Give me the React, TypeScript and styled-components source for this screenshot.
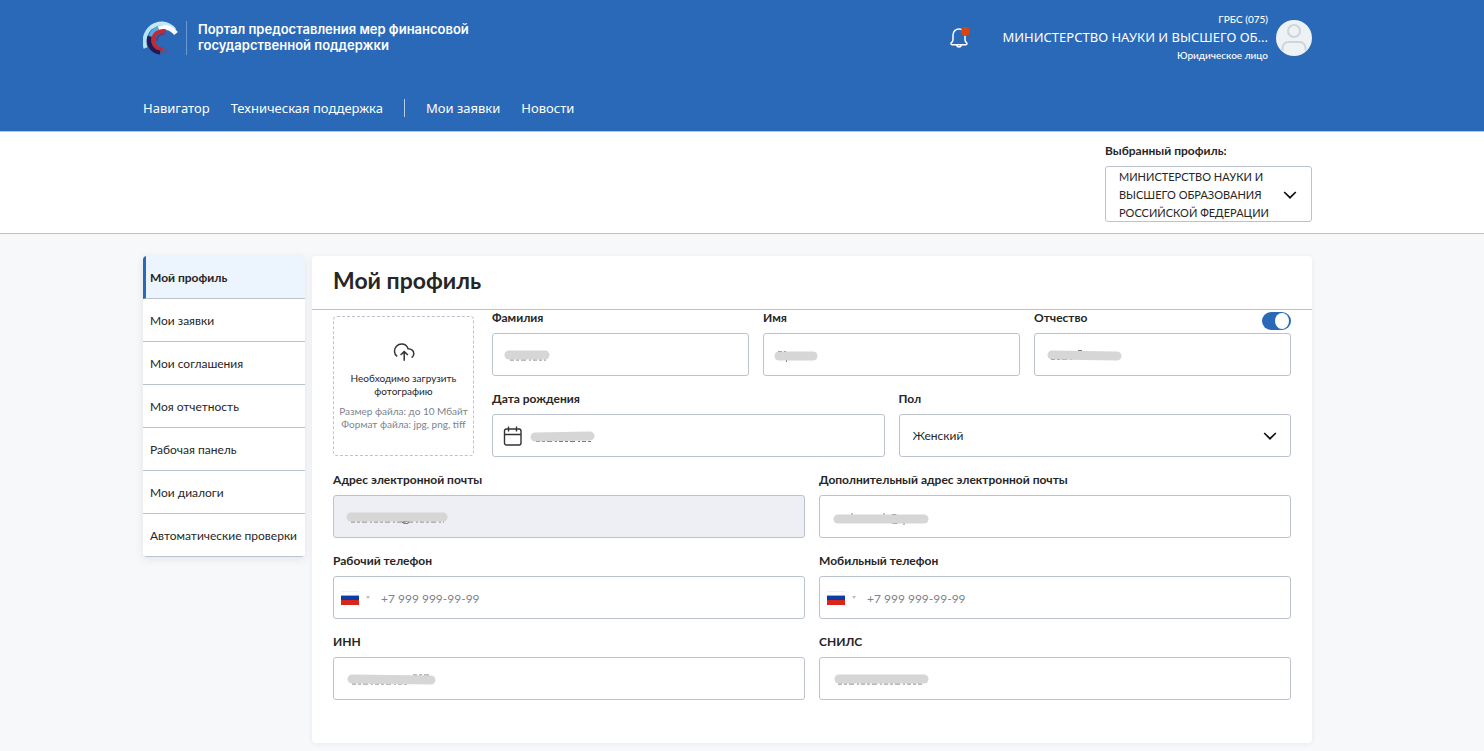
import React, { useId } from 'react';
import styled, { createGlobalStyle, css } from 'styled-components';

const color = {
  blue: '#2a69b8',
  line: '#bcc3ce',
  text: '#262626',
  muted: '#7d838d',
  page: '#f7f8fa',
};

const GlobalStyle = createGlobalStyle`
  *, *::before, *::after { box-sizing: border-box; }
  body {
    margin: 0;
    background: ${color.page};
    color: ${color.text};
    font-family: Lato, "Noto Sans", sans-serif;
    font-size: 12px;
    line-height: 16px;
  }
  button, input, select { font: inherit; color: inherit; }
`;

const gutters = css`
  padding-left: 143px;
  padding-right: 172px;
`;

/* ---------- header ---------- */

const Header = styled.header`
  ${gutters}
  background: ${color.blue};
  border-bottom: 1px solid ${color.line};
  color: #fff;
`;

const HeaderTop = styled.div`
  display: flex;
  justify-content: space-between;
  height: 76px;
`;

const Brand = styled.a`
  display: flex;
  align-items: center;
  gap: 7px;
  color: inherit;
  text-decoration: none;
`;

const BrandName = styled.span`
  padding: 0 0 2px 11px;
  border-left: 1px solid #6d98cf;
  font: 600 13px/16px Inter, sans-serif;
`;

const Account = styled.div`
  display: flex;
  align-items: center;
`;

const BellButton = styled.button`
  display: block;
  margin-right: 27px;
  padding: 0;
  border: 0;
  background: none;
  line-height: 0;
  cursor: pointer;
`;

const AccountInfo = styled.div`
  width: 270px;
  margin-right: 8px;
  padding-bottom: 2px;
  text-align: right;
`;

const AccountMeta = styled.div`
  font-size: 10px;
  font-weight: 500;
  line-height: 16px;
`;

const AccountName = styled.div`
  white-space: nowrap;
  font-family: "Noto Sans", sans-serif;
  font-size: 13px;
  line-height: 20px;
`;

const Nav = styled.nav`
  display: flex;
  align-items: center;
  gap: 21px;
  height: 55px;
  padding-top: 8px;
`;

const NavLink = styled.a`
  color: inherit;
  font-family: "Noto Sans", sans-serif;
  font-size: 13px;
  line-height: 18px;
  text-decoration: none;
`;

const NavDivider = styled.span`
  width: 1px;
  height: 18px;
  background: #b5cbe7;
`;

/* ---------- profile switch ---------- */

const ProfileBar = styled.section`
  ${gutters}
  display: flex;
  justify-content: flex-end;
  padding-top: 11px;
  padding-bottom: 11px;
  background: #fff;
  border-bottom: 1px solid ${color.line};
`;

const ProfilePicker = styled.div`
  width: 207px;
`;

const ProfileLabel = styled.label`
  display: block;
  margin-bottom: 7px;
  font-weight: 700;
`;

const PickerBox = styled.div`
  position: relative;
  display: flex;
  align-items: center;
  justify-content: space-between;
  height: 56px;
  padding: 1px 14px 0 13px;
  border: 1px solid ${color.line};
  border-radius: 3px;
  font-size: 11px;
  line-height: 18px;
`;

const OverlaySelect = styled.select`
  position: absolute;
  inset: 0;
  width: 100%;
  opacity: 0;
  cursor: pointer;
`;

/* ---------- page body ---------- */

const Main = styled.main`
  ${gutters}
  display: flex;
  align-items: flex-start;
  gap: 7px;
  padding-top: 22px;
  padding-bottom: 8px;
`;

const SideMenu = styled.nav`
  flex: 0 0 162px;
  overflow: hidden;
  background: #fff;
  border-radius: 4px;
  box-shadow: 0 2px 8px rgba(60, 80, 110, 0.12);
`;

const SideLink = styled.a<{ $active?: boolean }>`
  display: flex;
  align-items: center;
  height: 43px;
  padding-top: 2px;
  padding-left: 7px;
  border-bottom: 1px solid ${color.line};
  color: inherit;
  text-decoration: none;
  ${({ $active }) =>
    $active &&
    css`
      padding-left: 4px;
      border-left: 3px solid ${color.blue};
      background: #ecf4fe;
      font-weight: 700;
    `}
`;

const Card = styled.section`
  flex: 1;
  min-width: 0;
  background: #fff;
  border-radius: 4px;
  box-shadow: 0 1px 5px rgba(60, 80, 110, 0.08);
`;

const CardTitle = styled.h1`
  margin: 0;
  padding: 9px 21px 14px;
  border-bottom: 1px solid ${color.line};
  font-size: 23px;
  font-weight: 700;
  line-height: 30px;
`;

const Form = styled.form`
  display: grid;
  gap: 15px;
  padding: 0 21px 43px;
`;

const Intro = styled.div`
  display: flex;
  gap: 18px;
`;

const IntroFields = styled.div`
  display: grid;
  flex: 1;
  gap: 15px;
`;

const FieldRow = styled.div<{ $columns: number }>`
  display: grid;
  grid-template-columns: repeat(${({ $columns }) => $columns}, minmax(0, 1fr));
  gap: 14px;
`;

const UploadBox = styled.label`
  position: relative;
  display: flex;
  flex: 0 0 141px;
  flex-direction: column;
  align-items: center;
  height: 140px;
  margin-top: 6px;
  padding-top: 25px;
  border: 1px dashed ${color.line};
  border-radius: 4px;
  font-size: 10px;
  line-height: 13px;
  text-align: center;
  cursor: pointer;
`;

const UploadInput = styled.input`
  position: absolute;
  inset: 0;
  width: 100%;
  opacity: 0;
`;

const UploadText = styled.span`
  margin-top: 10px;
`;

const UploadHint = styled.span`
  margin-top: 7px;
  color: ${color.muted};
`;

const FieldHead = styled.div`
  display: flex;
  align-items: flex-start;
  justify-content: space-between;
  height: 23px;
`;

const FieldLabel = styled.label`
  font-weight: 700;
`;

const Control = styled.div<{ $disabled?: boolean }>`
  position: relative;
  display: flex;
  align-items: center;
  height: 43px;
  border: 1px solid ${color.line};
  border-radius: 3px;
  background: ${({ $disabled }) => ($disabled ? '#eeeff4' : '#fff')};
`;

const ControlInput = styled.input`
  flex: 1;
  min-width: 0;
  height: 100%;
  padding: 1px 11px 0;
  border: 0;
  outline: 0;
  background: none;
  &::placeholder { color: ${color.muted}; opacity: 1; }
`;

const ControlSelect = styled.select`
  flex: 1;
  height: 100%;
  padding: 1px 13px 0;
  border: 0;
  outline: 0;
  background: none;
  appearance: none;
`;

const SelectArrow = styled.span`
  position: absolute;
  right: 13px;
  display: flex;
  pointer-events: none;
`;

const LeadingIcon = styled.span`
  display: flex;
  padding-left: 10px;
`;

const CountryButton = styled.button`
  display: flex;
  align-items: center;
  gap: 7px;
  padding: 0 0 0 7px;
  border: 0;
  background: none;
`;

const Redaction = styled.svg<{ $left: number }>`
  position: absolute;
  left: ${({ $left }) => $left}px;
  top: 10px;
  overflow: visible;
  pointer-events: none;
`;

const Switch = styled.input`
  appearance: none;
  width: 29px;
  height: 18px;
  margin: 2px 0 0;
  border-radius: 9px;
  background: ${color.blue};
  cursor: pointer;
  &::before {
    content: '';
    display: block;
    width: 14px;
    height: 16px;
    margin: 1px 2px 1px 13px;
    border-radius: 50%;
    background: #fff;
  }
`;

/* ---------- drawings ---------- */

const Logo = () => (
  <svg width="36" height="36" viewBox="0 0 36 36" fill="none" aria-hidden="true">
    <path d="M2.600 28C-.5 19 3.500 8 12.500 4.800" stroke="#b5e2f5" strokeWidth="4" />
    <path d="M8 7.500C15 1.500 25 2 31.500 10" stroke="#c3e8f8" strokeWidth="4" />
    <path d="M13 10C20 5.500 28 7 33 13.500" stroke="#fff" strokeWidth="4.600" />
    <path d="M7.500 16A14 14 0 0 1 15.500 8" stroke="#5aa9dc" strokeWidth="4" />
    <path d="M6.500 16.500C4.500 24 9 32 17.500 32.600" stroke="#231a55" strokeWidth="4.400" />
    <path d="M17 32.700C20.500 33 23.500 32 26 30" stroke="#4a5a96" strokeWidth="3" />
    <path d="M22.800 11C14.500 9.500 9.800 15 10.300 20.500C10.700 25.500 14.300 29.300 20 29" stroke="#c5282f" strokeWidth="3.600" />
    <path d="M22 13.800C17 13.500 13.500 17 13.800 21" stroke="#7d2b55" strokeWidth="1.200" />
  </svg>
);

const BellIcon = () => (
  <svg width="22" height="22" viewBox="0 0 22 22" fill="none" aria-hidden="true">
    <path
      d="M4 10V8.300C4 4.300 6.800 1.900 10 1.900s6 2.400 6 6.400v4.200c0 1.700.5 2.500 1.500 3.200.7.500.6 2-.6 2H3c-1.200 0-1.300-1.500-.6-2 1-.7 1.600-1.500 1.600-3.200z"
      stroke="#fff"
      strokeWidth="1.500"
      strokeLinejoin="round"
    />
    <path d="M7.500 18c.5 1.500 1.300 2 2.500 2s2-.5 2.500-2" stroke="#fff" strokeWidth="1.500" />
    <circle cx="16.500" cy="4.500" r="4.500" fill="#d8430f" />
  </svg>
);

const Avatar = () => (
  <svg width="36" height="36" viewBox="0 0 36 36" fill="none" role="img" aria-label="Аватар">
    <circle cx="18" cy="18" r="18" fill="#eef2f5" />
    <circle cx="18" cy="11" r="6" stroke="#cbd5da" strokeWidth="2" />
    <path d="M6.500 30.500V28a6 6 0 0 1 6-6h11a6 6 0 0 1 6 6v2.500" stroke="#cbd5da" strokeWidth="2" />
  </svg>
);

const Chevron = () => (
  <svg width="14" height="8" viewBox="0 0 14 8" fill="none" aria-hidden="true">
    <path d="M1.200 1l5.800 5.700L12.800 1" stroke="#111" strokeWidth="1.700" />
  </svg>
);

const CloudUpload = () => (
  <svg width="22" height="20" viewBox="0 0 22 20" fill="none" stroke="#333" strokeWidth="1.500" aria-hidden="true">
    <path d="M4.200 14.400A6.200 6.200 0 0 1 1.500 9.500C1.500 5 4.800 2 8.600 2c3.100 0 5.500 1.900 6.500 4.700 3.300.1 5.700 2.200 5.700 5 0 1.700-.8 3.100-2.200 4" />
    <path d="M11.200 18.800v-9M7.600 13l3.600-3.400 3.700 3.400" />
  </svg>
);

const CalendarIcon = () => (
  <svg width="20" height="20" viewBox="0 0 20 20" fill="none" stroke="#333" strokeWidth="1.400" aria-hidden="true">
    <rect x="1.500" y="3" width="16.500" height="16" rx="2" />
    <path d="M1.500 8.500H18M5.500.5v5M13.500.5v5" />
  </svg>
);

const Flag = () => (
  <svg width="18" height="14" viewBox="0 0 18 14" aria-hidden="true">
    <rect width="18" height="14" fill="#f1f1f1" />
    <rect y="1" width="18" height="3" fill="#fff" />
    <rect y="4" width="18" height="1" fill="#8fb0dc" />
    <rect y="5" width="18" height="4" fill="#0d3ba6" />
    <rect y="9" width="18" height="5" fill="#d9261c" />
  </svg>
);

const SmallCaret = () => (
  <svg width="4" height="3" viewBox="0 0 4 3" aria-hidden="true">
    <path d="M0 0h4L2 3z" fill="#b9bdc4" />
  </svg>
);

/* ---------- fields ---------- */

type Mask = {
  left: number;
  width: number;
  y?: number;
  slope?: number;
  trace?: string;
  at?: number;
};

/* Grey stroke hiding a personal value, with only scraps showing past its edge. */
const MaskStroke = ({ left, width, y = 11, slope = 0, trace, at }: Mask) => (
  <Redaction $left={left} width={width} height="22" aria-hidden="true">
    {trace && <path d={trace} stroke="#777" strokeWidth="1" strokeDasharray="4 2 3 2 5 3 2 2" fill="none" />}
    {at !== undefined && (
      <text x={at} y="16" fontSize="12" fill="#333">
        @
      </text>
    )}
    <path d={`M5 ${y}L${width - 5} ${y + slope}`} stroke="#d6d6d6" strokeWidth="9" strokeLinecap="round" />
  </Redaction>
);

type FieldProps = {
  label: string;
  mask?: Mask;
  disabled?: boolean;
  type?: string;
  icon?: React.ReactNode;
  aside?: React.ReactNode;
  placeholder?: string;
};

const Field = ({ label, mask, disabled, type = 'text', icon, aside, placeholder }: FieldProps) => {
  const id = useId();
  return (
    <div>
      <FieldHead>
        <FieldLabel htmlFor={id}>{label}</FieldLabel>
        {aside}
      </FieldHead>
      <Control $disabled={disabled}>
        {icon}
        <ControlInput id={id} type={type} disabled={disabled} placeholder={placeholder} />
        {mask && <MaskStroke {...mask} />}
      </Control>
    </div>
  );
};

const Country = () => (
  <CountryButton type="button" aria-label="Код страны">
    <Flag />
    <SmallCaret />
  </CountryButton>
);

const menu = ['Мой профиль', 'Мои заявки', 'Мои соглашения', 'Моя отчетность', 'Рабочая панель', 'Мои диалоги', 'Автоматические проверки'];

export default function App() {
  return (
    <>
      <GlobalStyle />
      <Header>
        <HeaderTop>
          <Brand href="#">
            <Logo />
            <BrandName>
              Портал предоставления мер финансовой
              <br />
              государственной поддержки
            </BrandName>
          </Brand>
          <Account>
            <BellButton type="button" aria-label="Уведомления">
              <BellIcon />
            </BellButton>
            <AccountInfo>
              <AccountMeta>ГРБС (075)</AccountMeta>
              <AccountName>МИНИСТЕРСТВО НАУКИ И ВЫСШЕГО ОБ...</AccountName>
              <AccountMeta>Юридическое лицо</AccountMeta>
            </AccountInfo>
            <Avatar />
          </Account>
        </HeaderTop>
        <Nav>
          <NavLink href="#">Навигатор</NavLink>
          <NavLink href="#">Техническая поддержка</NavLink>
          <NavDivider />
          <NavLink href="#">Мои заявки</NavLink>
          <NavLink href="#">Новости</NavLink>
        </Nav>
      </Header>

      <ProfileBar>
        <ProfilePicker>
          <ProfileLabel htmlFor="profile">Выбранный профиль:</ProfileLabel>
          <PickerBox>
            <span>
              МИНИСТЕРСТВО НАУКИ И<br />
              ВЫСШЕГО ОБРАЗОВАНИЯ
              <br />
              РОССИЙСКОЙ ФЕДЕРАЦИИ
            </span>
            <Chevron />
            <OverlaySelect id="profile">
              <option>МИНИСТЕРСТВО</option>
            </OverlaySelect>
          </PickerBox>
        </ProfilePicker>
      </ProfileBar>

      <Main>
        <SideMenu>
          {menu.map((item, i) => (
            <SideLink key={item} href="#" $active={i === 0}>
              {item}
            </SideLink>
          ))}
        </SideMenu>

        <Card>
          <CardTitle>Мой профиль</CardTitle>
          <Form>
            <Intro>
              <UploadBox>
                <CloudUpload />
                <UploadText>
                  Необходимо загрузить
                  <br />
                  фотографию
                </UploadText>
                <UploadHint>
                  Размер файла: до 10 Мбайт
                  <br />
                  Формат файла: jpg, png, tiff
                </UploadHint>
                <UploadInput type="file" />
              </UploadBox>
              <IntroFields>
                <FieldRow $columns={3}>
                  <Field label="Фамилия" mask={{ left: 11, width: 46, trace: 'M6 16H42' }} />
                  <Field label="Имя" mask={{ left: 10, width: 44, y: 12, trace: 'M4 7.500H12M12.500 14V19' }} />
                  <Field
                    label="Отчество"
                    mask={{ left: 12, width: 75, trace: 'M4 15.500H27M31 6.500H35', slope: 1 }}
                    aside={<Switch type="checkbox" defaultChecked aria-label="Есть отчество" />}
                  />
                </FieldRow>
                <FieldRow $columns={2}>
                  <Field
                    label="Дата рождения"
                    icon={
                      <LeadingIcon>
                        <CalendarIcon />
                      </LeadingIcon>
                    }
                    mask={{ left: 37, width: 65, y: 12, slope: -1, trace: 'M6 16.500H63' }}
                  />
                  <div>
                    <FieldHead>
                      <FieldLabel htmlFor="sex">Пол</FieldLabel>
                    </FieldHead>
                    <Control>
                      <ControlSelect id="sex" defaultValue="Женский">
                        <option>Женский</option>
                        <option>Мужской</option>
                      </ControlSelect>
                      <SelectArrow>
                        <Chevron />
                      </SelectArrow>
                    </Control>
                  </div>
                </FieldRow>
              </IntroFields>
            </Intro>
            <FieldRow $columns={2}>
              <Field label="Адрес электронной почты" disabled mask={{ left: 12, width: 102, trace: 'M5 16H98', at: 54 }} />
              <Field
                label="Дополнительный адрес электронной почты"
                mask={{ left: 13, width: 96, y: 13, trace: 'M18 8H20M50 8H52M70 18H72', at: 56 }}
              />
            </FieldRow>
            <FieldRow $columns={2}>
              <Field label="Рабочий телефон" type="tel" icon={<Country />} placeholder="+7 999 999-99-99" />
              <Field label="Мобильный телефон" type="tel" icon={<Country />} placeholder="+7 999 999-99-99" />
            </FieldRow>
            <FieldRow $columns={2}>
              <Field label="ИНН" mask={{ left: 13, width: 89, slope: 1, trace: 'M5 16H60M66 7H84' }} />
              <Field label="СНИЛС" mask={{ left: 14, width: 95, trace: 'M4 16H88' }} />
            </FieldRow>
          </Form>
        </Card>
      </Main>
    </>
  );
}
